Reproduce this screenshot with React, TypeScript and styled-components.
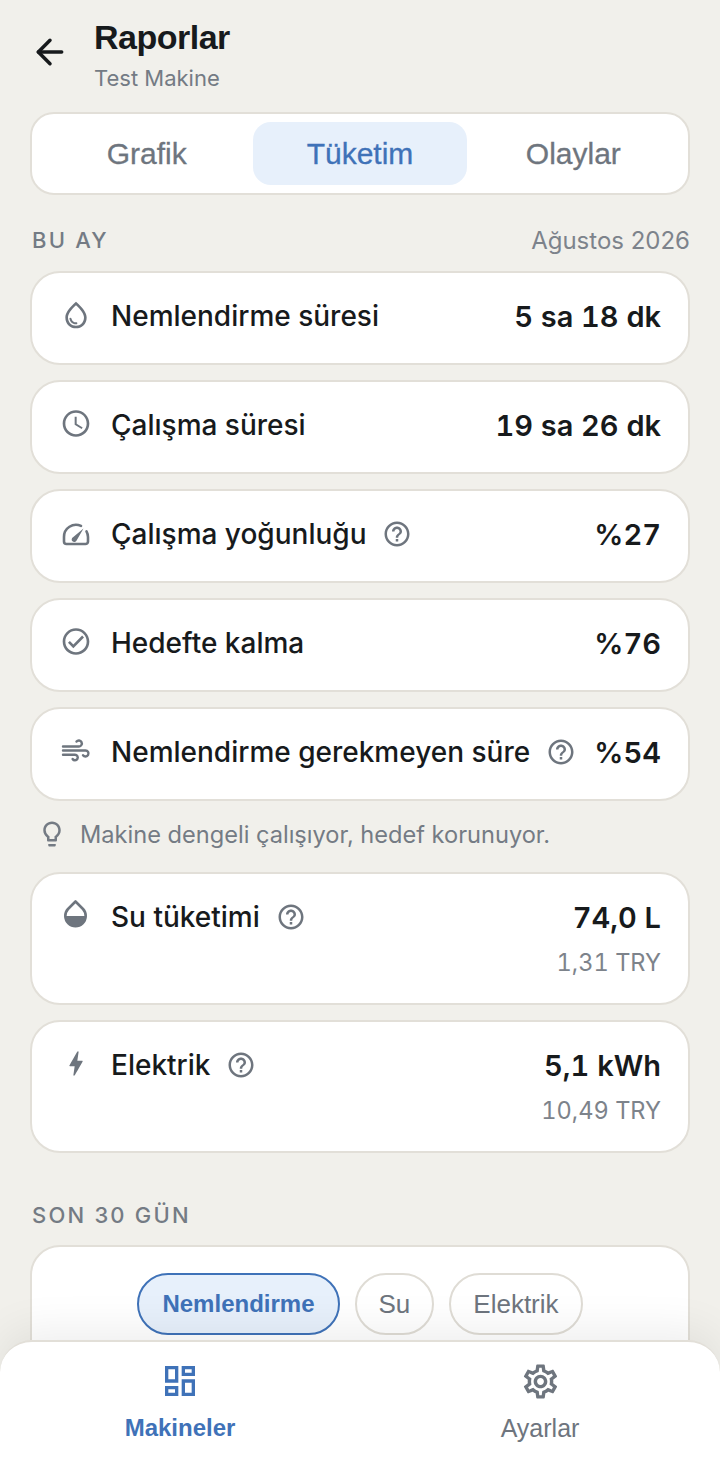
import React from 'react'
import styled, { createGlobalStyle } from 'styled-components'
import { ArrowLeft } from 'lucide-react'
import {
  MdBolt,
  MdOutlineAccessTime,
  MdOutlineCheckCircle,
  MdOutlineDashboard,
  MdOutlineHelpOutline,
  MdOutlineLightbulb,
  MdOutlineSettings,
  MdOutlineWaterDrop
} from 'react-icons/md'

const GlobalStyle = createGlobalStyle`
  html, body {
    margin: 0;
    padding: 0;
    background: #f1f0eb;
    font-family: Inter, "Liberation Sans", sans-serif;
  }
`

const Screen = styled.div`
  position: relative;
  display: flex;
  flex-direction: column;
  height: 1465px;
  overflow: hidden;
  background: #f1f0eb;
`

const Content = styled.div`
  flex: 1;
  min-height: 0;
  overflow: hidden;
  padding: 0 30px;
`

const Header = styled.header`
  display: flex;
  align-items: flex-start;
  gap: 24px;
  padding-top: 16px;
  height: 112px;
  box-sizing: border-box;
  color: #171a1c;
  svg {
    flex: none;
    margin-top: 16px;
  }
`

const HeaderTitle = styled.h1`
  margin: 0;
  font: 700 34px/42px 'Liberation Sans', sans-serif;
  letter-spacing: -0.5px;
  color: #171a1c;
`

const HeaderSub = styled.div`
  font: 400 22px/30px 'Inter', sans-serif;
  color: #747b84;
  margin-top: 5px;
`

const TabBar = styled.div`
  display: grid;
  grid-template-columns: repeat(3, 1fr);
  box-sizing: border-box;
  height: 83px;
  padding: 8px;
  background: #fff;
  border: 2px solid #e2dfd8;
  border-radius: 24px;
`

const Tab = styled.div<{ $active?: boolean }>`
  display: flex;
  align-items: center;
  justify-content: center;
  border-radius: 18px;
  font: 400 30px 'Liberation Sans', sans-serif;
  -webkit-text-stroke: 0.3px currentColor;
  color: ${p => (p.$active ? '#3f72b8' : '#6e757e')};
  background: ${p => (p.$active ? '#e7f0fb' : 'transparent')};
`

const SectionRow = styled.div<{ $top: number }>`
  display: flex;
  justify-content: space-between;
  align-items: center;
  margin: ${p => p.$top}px 2px 16px 2px;
  height: 30px;
`

const SectionLabel = styled.div`
  font: 450 22px 'Inter', sans-serif;
  letter-spacing: 2.2px;
  color: #747b84;
`

const SectionDate = styled.div`
  font: 400 24px 'Inter', sans-serif;
  color: #7d838b;
  margin-right: -2px;
`

const Stack = styled.div`
  display: flex;
  flex-direction: column;
  gap: 15px;
`

const Card = styled.div<{ $tall?: boolean }>`
  display: flex;
  justify-content: space-between;
  align-items: flex-start;
  box-sizing: border-box;
  height: ${p => (p.$tall ? 133 : 94)}px;
  padding: 25px 27px 0 28px;
  background: #fff;
  border: 2px solid #e2dfd8;
  border-radius: 30px;
`

const CardLeft = styled.div`
  display: flex;
  align-items: center;
  min-width: 0;
`

const IconSlot = styled.span<{ $lift?: number }>`
  display: flex;
  justify-content: center;
  width: 32px;
  height: 32px;
  margin-right: 19px;
  margin-top: ${p => -7 - (p.$lift ?? 0)}px;
  color: #6e757e;
  flex: none;
`

const CardLabel = styled.span`
  font: 450 28px/36px 'Inter', sans-serif;
  color: #171a1c;
  white-space: nowrap;
`

const Help = styled.span`
  display: inline-flex;
  margin-left: 16px;
  color: #6e757e;
`

const Values = styled.div`
  text-align: right;
`

const Value = styled.div`
  font: 600 29px/38px 'Inter', sans-serif;
  font-variant-numeric: tabular-nums;
  color: #171a1c;
  white-space: nowrap;
`

const SubValue = styled.div`
  font: 400 23.6px/30px 'Inter', sans-serif;
  font-variant-numeric: tabular-nums;
  color: #7d838b;
  margin-top: 11px;
`

const Hint = styled.div`
  display: flex;
  align-items: center;
  gap: 13px;
  box-sizing: border-box;
  height: 71px;
  padding-bottom: 5px;
  margin-left: 7px;
  font: 400 23.6px 'Inter', sans-serif;
  color: #747b84;
  svg {
    flex: none;
  }
`

const ChartCard = styled.div`
  display: flex;
  justify-content: center;
  gap: 15px;
  box-sizing: border-box;
  height: 300px;
  margin-top: -1px;
  padding-top: 26px;
  background: #fff;
  border: 2px solid #e2dfd8;
  border-radius: 30px;
`

const Chip = styled.div<{ $active?: boolean }>`
  display: flex;
  align-items: center;
  box-sizing: border-box;
  height: 62px;
  padding: 0 ${p => (p.$active ? 23 : 22)}px;
  border-radius: 31px;
  border: 2px solid ${p => (p.$active ? '#3f72b8' : '#dfdcd5')};
  background: ${p => (p.$active ? '#e7f0fb' : '#fff')};
  color: ${p => (p.$active ? '#3f72b8' : '#6e757e')};
  font: ${p => (p.$active ? '700 24px' : '400 26px')} 'Liberation Sans', sans-serif;
`

const Nav = styled.nav`
  position: relative;
  display: grid;
  grid-template-columns: 1fr 1fr;
  box-sizing: border-box;
  height: 125px;
  background: #fff;
  border-top: 2px solid #e2dfd8;
  border-radius: 32px 32px 0 0;
  box-shadow: 0 -10px 44px rgba(0, 0, 0, 0.07);
`

const NavItem = styled.div<{ $active?: boolean }>`
  display: flex;
  flex-direction: column;
  align-items: center;
  padding-top: 19px;
  color: ${p => (p.$active ? '#3f72b8' : '#6e757e')};
  font: ${p => (p.$active ? '700 24px' : '400 25px')}/30px 'Liberation Sans', sans-serif;
`

const NavIcon = styled.span`
  display: flex;
  justify-content: center;
  height: 40px;
`

const NavLabel = styled.span`
  margin-top: 12px;
`

const HalfDrop = () => (
  <svg width="28" height="32" viewBox="0 0 28 32" fill="none">
    <path d="M13.5 3.5 6 11a10.2 10.2 0 1 0 15 0L13.5 3.5Z" stroke="currentColor" strokeWidth="2.6" strokeLinejoin="round" />
    <path d="M3.1 18h20.8a10.4 10.4 0 1 1-20.8 0Z" fill="currentColor" />
  </svg>
)

const GaugeIcon = () => (
  <svg width="32" height="32" viewBox="0 0 32 32" fill="none">
    <g transform="translate(2 7)">
      <path
        d="M19 3.9A12 12 0 0 0 2 15v4.5A2.5 2.5 0 0 0 4.5 22h19a2.5 2.5 0 0 0 2.5-2.5V15a12 12 0 0 0-1.5-5.6"
        stroke="currentColor"
        strokeWidth="2.6"
        strokeLinecap="round"
      />
      <path d="M21.5 6.5 14.6 18.6a2.6 2.6 0 1 1-3.6-3.4L21.5 6.5Z" fill="currentColor" />
    </g>
  </svg>
)

const WindIcon = () => (
  <svg width="32" height="32" viewBox="0 0 32 32" fill="none">
    <g transform="translate(2 6)" stroke="currentColor" strokeWidth="2.4" strokeLinecap="round">
      <path d="M14.5 2.6A3 3 0 1 1 17 7.5H1" />
      <path d="M1 11.5H23.5A3 3 0 1 1 21 16.2" />
      <path d="M1 15.7H13A2.8 2.8 0 1 1 10.6 20" />
    </g>
  </svg>
)

const rows = [
  { icon: <MdOutlineWaterDrop size={36} />, label: 'Nemlendirme süresi', value: '5 sa 18 dk' },
  { icon: <MdOutlineAccessTime size={35} />, label: 'Çalışma süresi', value: '19 sa 26 dk' },
  { icon: <GaugeIcon />, label: 'Çalışma yoğunluğu', value: '%27', help: true },
  { icon: <MdOutlineCheckCircle size={35} />, label: 'Hedefte kalma', value: '%76' },
  { icon: <WindIcon />, label: 'Nemlendirme gerekmeyen süre', value: '%54', help: true }
]

const HelpIcon = () => (
  <Help>
    <MdOutlineHelpOutline size={30} />
  </Help>
)

export default function App() {
  return (
    <Screen>
      <GlobalStyle />
      <Content>
        <Header>
          <ArrowLeft size={40} strokeWidth={2.1} />
          <div>
            <HeaderTitle>Raporlar</HeaderTitle>
            <HeaderSub>Test Makine</HeaderSub>
          </div>
        </Header>
        <TabBar>
          <Tab>Grafik</Tab>
          <Tab $active>Tüketim</Tab>
          <Tab>Olaylar</Tab>
        </TabBar>
        <SectionRow $top={30}>
          <SectionLabel>BU AY</SectionLabel>
          <SectionDate>Ağustos 2026</SectionDate>
        </SectionRow>
        <Stack>
          {rows.map(row => (
            <Card key={row.label}>
              <CardLeft>
                <IconSlot>{row.icon}</IconSlot>
                <CardLabel>{row.label}</CardLabel>
                {row.help && <HelpIcon />}
              </CardLeft>
              <Value>{row.value}</Value>
            </Card>
          ))}
        </Stack>
        <Hint>
          <MdOutlineLightbulb size={30} />
          Makine dengeli çalışıyor, hedef korunuyor.
        </Hint>
        <Stack>
          <Card $tall>
            <CardLeft>
              <IconSlot>
                <HalfDrop />
              </IconSlot>
              <CardLabel>Su tüketimi</CardLabel>
              <HelpIcon />
            </CardLeft>
            <Values>
              <Value>74,0 L</Value>
              <SubValue>1,31 TRY</SubValue>
            </Values>
          </Card>
          <Card $tall>
            <CardLeft>
              <IconSlot $lift={2}>
                <MdBolt size={37} />
              </IconSlot>
              <CardLabel>Elektrik</CardLabel>
              <HelpIcon />
            </CardLeft>
            <Values>
              <Value>5,1 kWh</Value>
              <SubValue>10,49 TRY</SubValue>
            </Values>
          </Card>
        </Stack>
        <SectionRow $top={47}>
          <SectionLabel>SON 30 GÜN</SectionLabel>
        </SectionRow>
        <ChartCard>
          <Chip $active>Nemlendirme</Chip>
          <Chip>Su</Chip>
          <Chip>Elektrik</Chip>
        </ChartCard>
      </Content>
      <Nav>
        <NavItem $active>
          <NavIcon>
            <MdOutlineDashboard size={40} />
          </NavIcon>
          <NavLabel>Makineler</NavLabel>
        </NavItem>
        <NavItem>
          <NavIcon>
            <MdOutlineSettings size={41} />
          </NavIcon>
          <NavLabel>Ayarlar</NavLabel>
        </NavItem>
      </Nav>
    </Screen>
  )
}
